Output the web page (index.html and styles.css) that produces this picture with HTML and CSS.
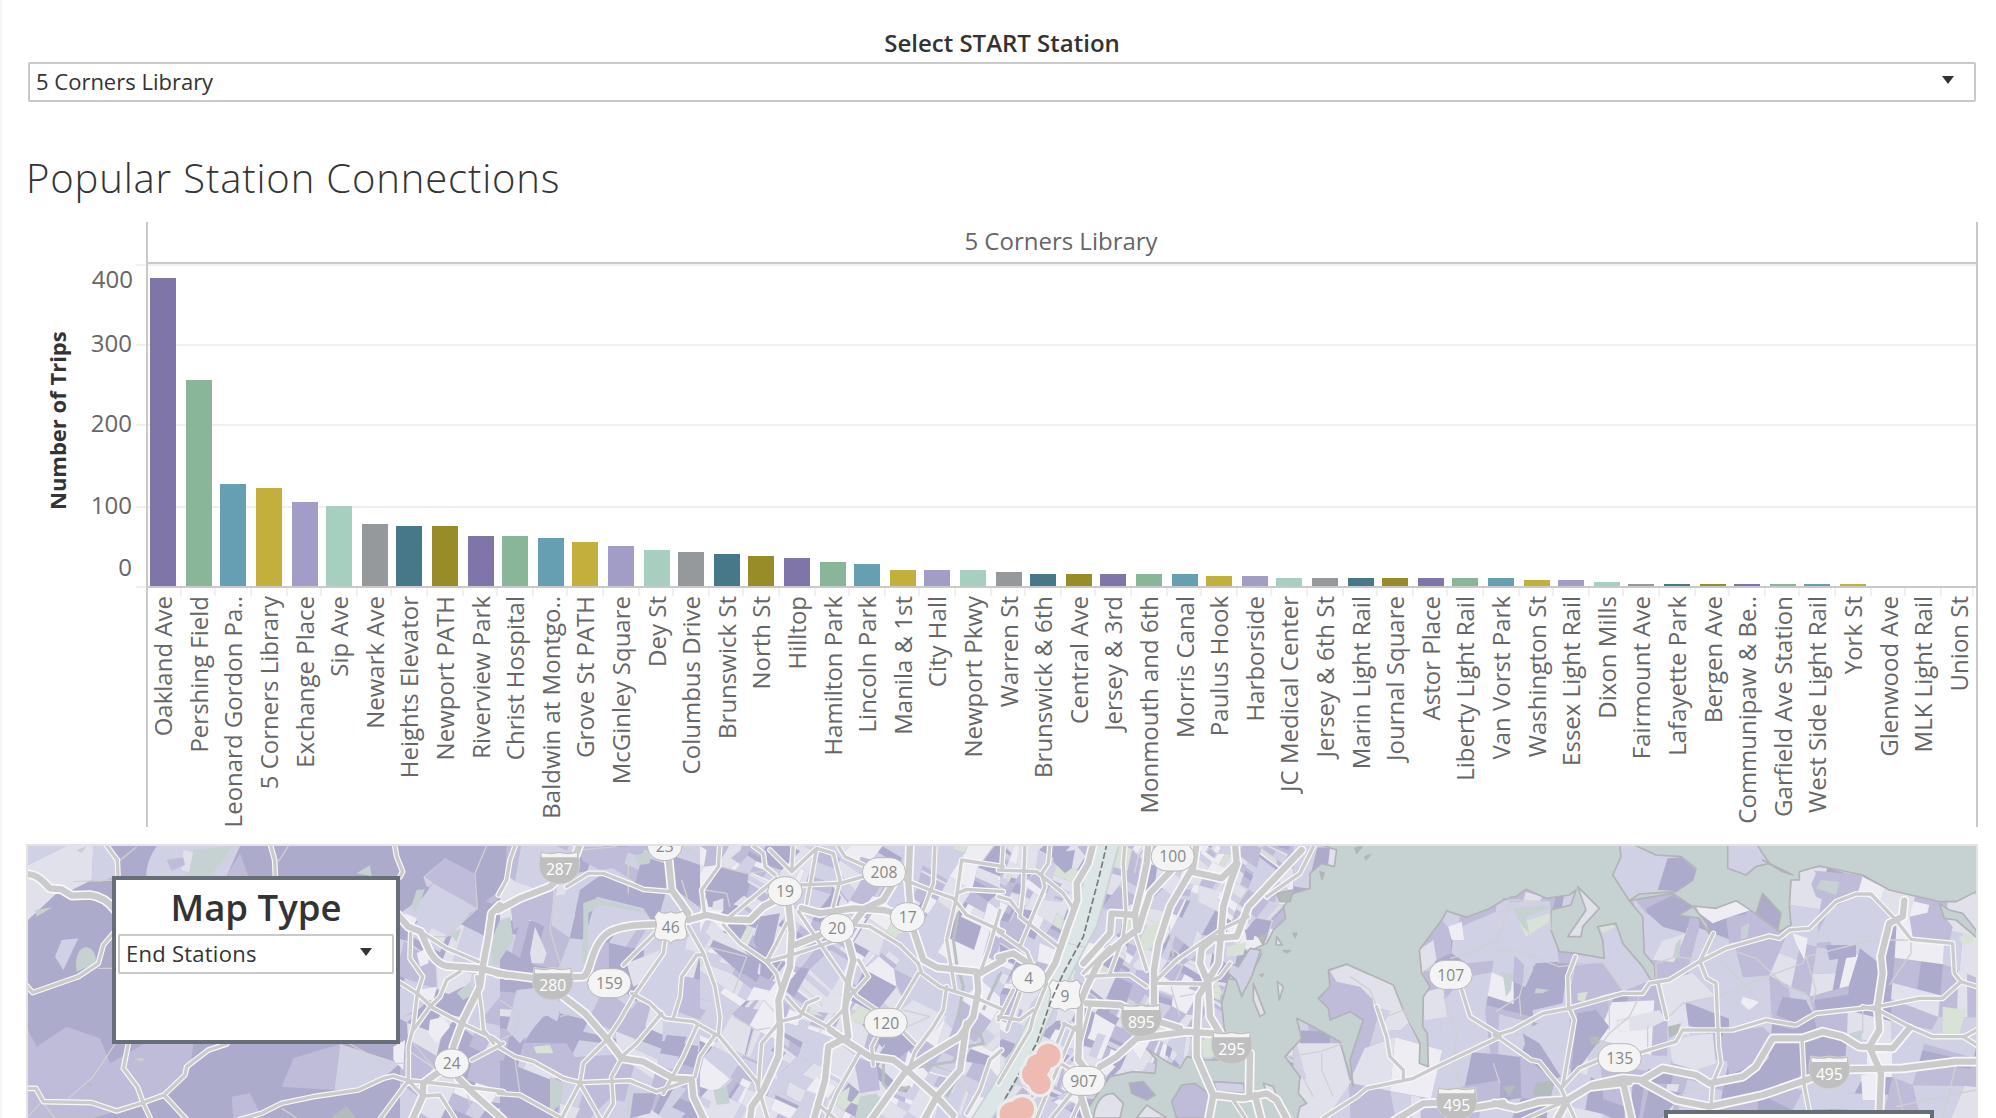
FILE: index.html
```html
<!DOCTYPE html>
<html lang="en">
<head>
<meta charset="utf-8">
<title>Popular Station Connections</title>
<link rel="stylesheet" href="styles.css">
</head>
<body>
<main class="dashboard">
  <section class="filter">
    <h2 class="filter-title">Select START Station</h2>
    <div class="select"><span>5 Corners Library</span><svg class="arrow" viewBox="0 0 12 8"><path d="M0 0H12L6 8Z"/></svg></div>
  </section>
  <h1 class="title">Popular Station Connections</h1>
  <section class="chart">
    <div class="axis">
      <div class="axis-title"><span>Number of Trips</span></div>
      <div class="axis-values"><span>400</span><span>300</span><span>200</span><span>100</span><span>0</span></div>
    </div>
    <div class="pane">
      <div class="pane-head"><span>5 Corners Library</span></div>
      <div class="plot" id="plot"></div>
      <div class="labels" id="labels"></div>
    </div>
  </section>
  <section class="map">
    <svg class="map-canvas" viewBox="84 48 5844 816" preserveAspectRatio="none" id="map">
      <defs>
        <g id="major">
          <g>
            <path d="M70,132C110,130 125,150 150,175L185,178L215,197L270,195C310,200 330,220 345,240M1190,250L1225,290L1262,305C1280,340 1290,395 1340,408L1440,415L1520,435"/>
            <path d="M1500,225L1475,250L1465,320L1450,400L1440,470L1390,570L1360,650L1355,700L1290,745L1270,760L1268,800L1235,874M1375,745L1420,790L1510,870"/>
          </g>
          <g transform="translate(1500)">
            <path d="M-5,240L60,205L150,170L215,110L240,40M-10,430L110,445L250,440C275,430 270,340 330,305C370,285 420,285 465,283M565,270L620,255L680,268L750,270L790,230L830,210M905,235L960,250L1060,235L1150,240L1180,248"/>
            <path d="M190,500L255,550L320,625L365,685L430,695L520,745L575,748L580,800L615,874M865,220L875,310L870,410L835,510L840,600L835,680L790,780L755,830L750,874M885,345L960,315M1180,160L1150,210L1095,235L1060,280M1230,40L1225,160L1230,220"/>
            <path d="M1240,300L1270,390L1310,412L1430,425L1435,480L1420,560L1380,620L1280,680L1220,720L1110,874M1045,335L1060,390L1045,450L1035,540L1045,620L985,650L975,750L940,874M990,600L1040,635L1110,680L1180,690L1220,720L1310,800L1360,855M1310,800L1270,874M1400,580L1380,720L1310,800M1440,430L1510,390M505,80L515,180L565,250"/>
          </g>
          <g transform="translate(3000)">
            <path d="M280,40L265,100L230,160L232,210L200,300L165,400L135,450M445,40L440,100L425,170L405,250L410,300L370,330L300,390L260,470L240,520L235,690L255,715M515,120L450,190L430,250L415,300M590,40L580,110L510,230L475,340L462,420L462,520M575,125L665,145L710,100L705,40M712,100L690,160L670,230L665,290L655,400L625,450L595,500L590,600L590,680L640,795L625,874"/>
            <path d="M905,60L820,150L745,230L710,320L640,325L605,355L600,400L625,460L630,560L660,610M260,520L360,525L430,560L540,595M300,710L350,680L410,625L560,605L640,610M750,670L748,790M640,795L730,805L800,790L830,810L865,874M765,795L785,874M-5,382L40,370L85,400M335,250L405,255M335,250L330,310L250,400M240,790L265,874M1180,874L1270,820L1330,818M1410,835L1510,818"/>
          </g>
          <g transform="translate(4488)">
            <path d="M-5,820L60,835L130,815L215,810L290,765L380,745L440,750L500,715L600,735L640,760L740,740L780,710L830,625L920,625L980,605L1040,620L1090,650L1190,655L1240,595M380,750L408,874M440,755L540,810L640,830L800,795L960,740M1040,718L1220,715L1380,695H1450M1225,212L1220,260L1180,280L1155,380L1160,430L1145,530L1150,600L1120,650L1155,730L1150,850M215,810L180,874M290,770L400,757"/>
          </g>
        </g>
        <g id="primary">
          <g>
            <path d="M315,40L352,90L354,138M810,40L824,90L826,138M1183,40L1190,80L1208,125L1200,140M70,455L98,488L235,440L295,400L310,345L340,310M70,775H108L130,815L275,818L350,843L430,818L492,795L555,735L560,710L625,660L680,642M385,642L370,715L412,770L430,820L455,874M492,795L565,874"/>
            <path d="M715,870L785,850L845,820L940,800L1075,780L1150,745L1180,738L1225,752L1330,762L1510,785M1232,310L1230,385L1268,440L1252,490L1240,590L1225,650V752M1195,455L1252,490L1300,535L1385,580L1480,625L1500,640M1262,305L1340,355L1435,395M1380,425L1340,450L1320,500L1290,530L1240,600M1430,440L1445,540L1450,600L1480,640M1225,752L1135,874M1510,640L1415,690M1225,752L1270,798L1320,795L1370,874"/>
          </g>
          <g transform="translate(1500)">
            <path d="M-5,195L20,150L30,90L48,40M265,130L310,130L400,165L430,178L510,185M200,170L265,130M660,40L655,110L605,180L615,260M565,290L610,370L645,470L660,560L655,615L770,755L805,874M465,310L370,405M495,335L490,370L400,500L360,570L320,630L250,700L240,760L180,874M-5,650L45,680L100,695L190,745L240,758L390,752L470,785L570,750M395,490L450,520L495,565L580,575L650,615"/>
            <path d="M605,375H590L545,440L540,500L520,565M-5,790L60,795L195,870M240,760L305,874M365,685L335,740L340,820L310,870M485,550L410,640L365,680M590,590L550,680L515,745L490,790M645,615L600,680L585,740M690,260L830,145M670,285L720,340L800,395L830,430L845,490M860,280L830,340L800,395L890,370L1010,330"/>
            <path d="M760,48L790,70L795,110L825,135M810,60L875,125L950,55L1000,70L1020,150L1000,230M950,55L920,220M880,40L875,125M900,165L1020,160L1090,140M1010,40L1035,80L1090,105M1215,150L1290,180L1360,205L1400,255L1510,305M1305,40L1300,160L1270,240M1385,90L1370,200L1340,330L1365,480M1385,90L1510,110M1370,190L1400,178L1510,185"/>
            <path d="M1065,285L1110,290L1200,345L1255,400L1265,430L1320,470L1430,505L1510,540M1255,430L1190,540M1340,470L1330,540L1300,590L1245,665L1225,720M895,245L960,340L1070,500L1130,540M1060,480L1030,540L980,590M840,575L900,560L920,520L955,505M860,500L900,545L1000,600M835,580L785,640L780,700L775,780M1120,705L1115,650L1130,620M1210,605L1245,640M1080,665L1010,790L980,864M1500,240L1465,360L1440,430M1505,660L1470,690L1440,780L1400,850M950,820L1010,870M1075,390L1105,440L1060,490"/>
          </g>
          <g transform="translate(3000)">
            <path d="M10,40L5,120M75,40L70,180L60,260M150,40L145,100L125,130L135,170L60,350M-5,120L110,125L190,190L220,235M-5,305L80,365L95,400M60,260L175,350M-5,200L30,210L60,250M375,40L370,100L378,250L370,320L330,430M470,450L530,390L660,300L745,260M475,460L610,462L660,440L690,400M250,430L330,350M260,440L340,435H390L440,470M405,310L440,420M945,40L900,130L800,200"/>
            <path d="M1385,480L1410,560L1500,615M970,864L1070,800L1100,775L1240,745L1300,715L1500,620M1130,530L1160,620L1170,680L1210,720V745M140,460L100,560L90,600L30,700L-5,760M40,480L-5,570M195,580L130,740L60,864M225,590L150,770L110,864M190,580L230,600M180,700L250,740M270,530L230,680M60,490L20,600M-5,560L60,570L100,540M215,790L150,870M250,790L215,870M700,810L740,870"/>
          </g>
          <g transform="translate(4488)">
            <path d="M-5,617L50,600L140,550L220,535L380,490H440L460,460L520,450L610,395L690,355L820,318L850,325L880,300L940,295L1020,215L1080,192H1125L1200,270L1245,328L1370,340L1375,430L1395,455L1340,505L1270,505L1145,530M1145,530L960,550L900,585L810,570L710,600H560L540,635L430,668M310,690L250,715L195,775M-5,612L105,690L130,695L195,775L240,874"/>
            <path d="M238,380L215,440L218,530L235,570L200,770M652,310L612,395L632,445L660,460L668,650L675,700L650,760L645,830M487,460L512,565M918,630L925,770L940,845M1100,530L1145,540L1240,590L1310,620H1405L1450,595M1405,622L1450,650M1395,455L1450,472M215,810L80,870"/>
          </g>
        </g>
        <g id="minor">
          <path d="M410,50L355,95M345,642L300,710L275,745L205,805M220,155L340,150M295,415H340M1460,48L1425,130L1432,235L1340,320H1290M1050,642L1155,700H1210M865,48L835,95M715,48L680,85L640,130M130,820L165,864M84,860L120,820M1240,640L1300,710M1380,380V425M845,835L890,864M1400,780L1420,864"/>
          <path transform="translate(1500)" d="M165,180L150,300L180,400M0,510L60,550L45,610L0,630M45,690L60,790M240,60L350,50M385,90V190M545,150L570,230M660,110L740,130L830,120M615,180L680,190L690,230M620,350L740,380L700,490M700,560L770,600L830,590M180,560L250,540M395,760L380,864M600,80L540,48M700,540L660,560M1290,560L1210,540M1200,600L1290,560"/>
          <path transform="translate(4488)" d="M0,330L20,290L40,210L160,215L165,300M0,360L60,360L150,395L190,410L320,395L380,480M95,410L70,500L0,545M70,500L75,560M430,500L400,560L340,610L290,680M515,565L560,520L680,495L760,460L920,400L930,380L1130,330H1245M690,355L780,385L870,470L930,490L950,540M930,380L960,480L950,520M1245,328V370L1180,465M660,380L740,460L830,560M480,455V400L540,380L610,390M455,590V660L300,700M1100,540V610M650,770L590,780L540,800M1440,700L1380,705L1340,864M1195,730L1220,840M1440,780L1200,830M340,510V600"/>
          <path transform="translate(3000)" d="M865,680L960,665L1030,640M965,670V720L1000,800M880,690L940,800M1050,440L1110,480L1130,530M1160,560L1210,540L1250,610M1500,325L1410,370L1350,385M1330,500L1370,600L1360,700M1360,700L1385,770M1480,700L1500,760M510,460L540,560M500,240L520,380M540,500L590,490M205,340L255,352"/>
        </g>
        <g id="interstate"><path d="M-56,-48Q-28,-40 0,-48Q28,-40 56,-48L60,-20C66,20 40,49 0,50C-40,49 -66,20 -60,-20Z" fill="#bfbfbf" stroke="#d2d2d2" stroke-width="3"/><path d="M-53,-43Q-26,-36 0,-43Q26,-36 53,-43V-30H-53Z" fill="#f4f4f4"/></g>
        <path id="us" d="M-37,-48Q-18,-36 0,-46Q18,-36 37,-48L49,-30Q38,-8 47,12Q54,36 30,39Q10,36 0,48Q-10,36 -30,39Q-54,36 -47,12Q-38,-8 -49,-30Z"/>
      </defs>
      <rect x="84" y="48" width="5850" height="820" fill="#adabcc"/>
      <g id="tracts"></g>
      <g>
        <path class="c1" d="M1195,48H1500V180L1430,235L1420,130L1335,85L1270,140L1290,200L1200,220ZM1210,560L1390,470L1440,480L1380,560L1260,540Z"/>
        <path class="c3" d="M84,48H200L84,105ZM280,48H315L355,95L354,138L300,155L275,150ZM470,48H720L680,138H438Q440,90 470,48ZM1020,642L1200,700L1150,745L1075,780L1003,780ZM165,380L185,330L235,325L190,420ZM1300,160L1432,235L1410,250L1350,320L1200,250L1270,200Z"/>
        <path class="c4" d="M200,48H280L275,150L205,185L170,190L84,270V105ZM550,60L620,80L580,130L545,120Z"/>
        <path class="c2" d="M84,600L110,650L200,590L300,625L330,700L430,642H580L570,720L490,795L430,820L280,864H84ZM845,770L880,685L1020,642L1003,780ZM695,800L750,790L780,850L700,864ZM1275,140L1335,85L1420,130L1432,235L1300,160ZM500,90L550,82L555,105L515,122ZM680,138L720,70L745,138ZM1140,864L1225,752L1200,800ZM1420,680L1500,645V780L1400,750Z"/>
        <path class="c5" d="M1215,250L1250,265L1240,300L1210,290ZM1250,370L1290,350L1285,400L1260,410ZM1290,570L1330,560L1350,590L1310,640L1285,610ZM1180,650L1215,630L1210,720L1180,690ZM1255,480L1310,470L1300,515L1265,500Z"/>
        <path class="wt" d="M580,60L700,48L660,100L630,138H565ZM1235,225L1250,180L1275,178L1245,250ZM228,400Q232,350 262,352Q290,360 288,400L230,425ZM1070,130L1110,105L1115,138ZM105,240L158,232L110,260ZM230,60L260,48L245,70ZM1470,340L1500,270V400L1480,405ZM1370,490L1410,455L1425,490L1390,510ZM1345,310L1385,295L1370,335ZM405,685L435,685L425,697Z"/>
        <path class="dk" d="M990,864L1040,828L1070,864ZM255,755L280,765L270,770Z"/>
        <g transform="translate(1500)">
          <path class="c1" d="M0,48H20L15,140L0,190ZM240,180L310,130L385,150L430,235L260,240L240,300L225,250ZM615,180L660,110L745,130L740,190L680,240L625,230ZM760,330L780,260L840,250L820,340L790,400ZM640,330L780,390L770,440L720,430L630,350ZM70,640L130,550L215,600L200,640ZM400,790L470,790L450,850L390,864ZM480,670L500,615L560,620L540,680ZM1135,620L1200,610L1240,650L1190,690ZM0,690L180,760L170,864H0Z"/>
          <path class="c2" d="M250,50L390,50L370,110L300,120L245,90ZM30,210L160,180L155,300L90,270L40,300ZM1060,680L1130,700L1140,780L1080,790ZM70,640L200,640L230,690L190,740L60,690Z"/>
          <path class="c3" d="M290,200L430,235L460,280L330,300L270,350L240,370ZM50,480L140,470L200,540L130,560L60,640L20,600ZM1180,550L1260,440L1320,480L1300,560L1240,640ZM500,340L600,370L540,430L520,560L440,510L420,460Z"/>
          <path class="c4" d="M90,370L105,290L140,370L130,400L95,400ZM380,400L480,360L440,450L400,470ZM640,215L670,205L670,240L635,240ZM1180,560L1240,510L1340,560L1310,600L1250,640Z"/>
          <path class="wt" d="M250,300L250,220L290,205L430,240L440,250L300,225L265,250L262,400L245,400ZM1080,800L1130,790L1150,830L1110,864H1065ZM150,740L190,760L185,820L150,850ZM0,270L30,260L40,330L0,390ZM400,80L450,60L450,100L420,105ZM640,780L680,770L690,820L650,825Z"/>
          <path class="gr" d="M1020,790L1050,770L1040,820L1010,830ZM100,650L150,645L160,670L110,670ZM1160,300L1200,290L1210,310L1170,315ZM930,530L970,560L930,550Z"/>
          <path d="M1375,250L1360,330L1370,400L1390,470L1375,560L1400,600L1440,610L1450,640L1400,650M1500,430L1450,540M1150,700L1150,760L1180,800M1200,780L1230,770M1230,715L1360,695L1380,660M1380,730L1340,800" fill="none" stroke="#b9c0c1" stroke-width="9"/>
        </g>
        <g transform="translate(3000)">
          <path class="gr" d="M440,290L480,270L470,340L430,370L420,330ZM680,350L740,335L730,375L680,380ZM645,450L665,480L660,510L640,505ZM380,270L400,260L400,310L380,320ZM605,630L635,630L640,680L610,680Z"/>
          <path class="c1" d="M160,70L225,60L215,115L195,130L160,95ZM735,300L770,290L760,330L740,330Z"/>
          <path class="c2" d="M1265,350L1325,270L1350,300L1355,370L1310,390L1300,340ZM1380,770L1500,750V840L1430,820Z"/>
          <path class="c3" d="M1360,300L1500,240V390L1400,400L1355,370Z"/>
          <path class="c4" d="M1258,360L1300,330L1310,390L1265,430ZM1265,490L1330,470L1340,560L1275,570ZM890,640L1020,640L1050,760L980,864L900,864L940,820Z"/>
          <path class="c5" d="M1345,290L1385,275L1392,330L1355,330Z"/>
        </g>
        <g transform="translate(4488)">
          <path class="c3" d="M0,215H160L190,400L90,410L60,380L0,350ZM300,280L370,290L440,400L465,450L380,485L320,395ZM410,200L450,250L570,310L480,340L440,360ZM80,600L215,545L220,620L190,740L90,640ZM1000,240L1080,195L1130,200L1190,280L1150,400L1060,330L950,340Z"/>
          <path class="c1" d="M120,400L185,395L210,440L200,520L90,545L70,510ZM245,550L300,540L340,590L260,700L220,760ZM450,235L530,195L590,230L570,310L500,290L455,250ZM840,660L920,640L910,745L800,790L750,760ZM860,500L930,510L950,550L900,580L840,555ZM80,610L130,640L195,740L170,750L100,690ZM990,345L1080,345L1080,380L1000,390ZM955,510L1140,480V520L960,550ZM460,770L560,790L500,864H440Z"/>
          <path class="c2" d="M690,260L780,250L800,310L700,340ZM240,400L320,400L380,480L260,510L225,470ZM930,120L1100,135L1080,190L1010,220L960,200ZM680,610L800,590L830,620L780,700L700,735ZM1240,260L1330,240L1370,290L1360,335L1250,320Z"/>
          <path class="c4" d="M500,450L590,430L660,500L560,520L515,560L490,480ZM520,640L570,620L650,610L660,700L600,720L530,700ZM360,570L490,540L510,570L450,600L370,605ZM900,60L960,130L930,200L890,200ZM1150,150L1260,190L1240,260L1200,260L1130,200Z"/>
          <path class="c5" d="M600,228L660,235L720,212L765,240L690,265L650,280L610,250ZM1100,140L1165,175L1150,215L1085,190ZM890,310L935,325L925,390L900,340ZM1205,340H1232V362H1205ZM1095,735L1140,730L1140,810H1100ZM365,575L400,570V605L370,600ZM740,500L790,515L760,540L735,520Z"/>
          <path class="gr" d="M1340,530L1410,540L1390,610H1340ZM70,280L160,250L160,275L90,320ZM310,290L350,282L360,290L320,310ZM1390,320L1435,310L1430,340L1400,345ZM245,490L275,485L265,515L245,510Z"/>
          <path class="wt" d="M20,430L50,430L45,480L30,500ZM540,340L555,325L550,380L530,385ZM735,290L760,280L755,320L735,330ZM975,150L1030,155L1020,195L960,175ZM50,235L150,225L160,235L90,260L100,310L80,290ZM1060,610L1100,600L1095,630L1070,635ZM120,475L160,480L140,490L115,490Z"/>
          <path class="dk" d="M280,620H310V640L285,645ZM515,590L555,580L545,610L520,625ZM120,760L175,750L165,800L110,795ZM20,770L60,765L40,800Z"/>
        </g>
      </g>
      <g class="wt coast">
        <path class="river" transform="translate(3000)" d="M285,40H358L315,200L290,290L230,400L150,560L110,660L40,770L-30,874H-90L20,700L90,560L140,440L200,320L235,220L250,150Z"/>
        <path transform="translate(3000)" d="M950,40L1010,60L1003,110L965,100L930,130V175L880,190L850,230L857,265L820,300L800,340L745,365L785,372L760,420L745,445L725,500L710,450L685,445L665,520L672,590L700,690H620L560,680L540,715L500,695L440,655L470,690L465,730L400,725L330,740L280,810L240,874H890L900,830L920,820L895,790L900,740L855,680L905,625L890,565L940,590L1020,635L1060,770L1050,690L1090,570L1050,545L990,570L985,535L955,505L990,470L985,420L1040,402L1180,465L1210,540L1260,640L1258,700L1285,710L1282,610L1268,590L1270,500L1290,470L1265,430L1258,360L1325,270L1340,243L1400,262L1470,235L1520,205V40Z"/>
        <path transform="translate(4488)" d="M20,40V205L60,200L90,178L150,205L220,195L240,180L225,225L165,240V300L190,365L240,370L325,385L320,330L305,290L360,280L380,340L440,410L465,450H478L475,405L445,370L440,260L400,212L530,190L590,230L550,255L610,265L645,320L632,280L590,228L660,235L720,212L770,245L850,305L885,285L880,230L885,150L910,150V125L970,108L1100,135L1180,180L1330,215L1380,215L1450,180V40Z"/>
        <path transform="translate(4488)" stroke="none" d="M0,40H40V204L0,208Z"/>
        <path transform="translate(4488)" d="M1330,220L1360,240L1400,250L1440,300L1445,325L1380,270L1345,265Z"/>
      </g>
      <g class="coast">
        <g transform="translate(4488)">
          <path class="c3" d="M370,40L375,80L350,135L400,212L430,192L540,185L590,150L600,115L555,80L480,75L415,45ZM695,40V115L750,135L780,110L820,100L780,40Z"/>
          <path class="c1" d="M780,250L800,190L855,250L845,300Z"/>
          <path class="c1" stroke="none" d="M515,85L555,82L600,120L590,152L540,183L485,180Z"/>
          <path class="c4" d="M245,170L310,235L260,290L255,320L215,320L270,240ZM800,90L890,135L860,125Z"/>
        </g>
        <g transform="translate(3000)">
          <path class="c1" d="M388,760L430,755L465,795L440,810L395,790Z"/>
          <path class="c2" d="M515,815L545,765L585,760L640,800L625,864H530Z"/>
          <path class="c3" d="M640,755L730,760L735,790L650,785ZM690,400L715,410L750,355L782,360L755,440L725,498L708,450L685,430Z"/>
          <path class="c4" d="M280,864Q290,790 340,790L370,820L360,864ZM410,864L440,825L500,864ZM760,460L795,550L780,560L760,510ZM830,320L847,345L828,345ZM832,455L850,470L838,510ZM790,760L820,770L850,864L800,790Z"/>
          <path class="c4" stroke="none" d="M990,424L1040,406L1178,468L1130,520L1080,470L1010,455Z"/>
          <path class="dk" d="M830,190L880,180L870,215L840,215ZM775,320L800,310L790,345ZM880,310L890,310L885,322ZM1065,55L1085,50L1070,70ZM1095,80L1110,75L1098,88ZM780,435L790,432L786,440ZM850,362L870,362L862,368ZM960,125L972,130L966,148Z"/>
        </g>
      </g>
      <use href="#minor" class="minor"/>
      <use href="#primary" class="casing-p"/>
      <use href="#major" class="casing-m"/>
      <use href="#primary" class="road-p"/>
      <use href="#major" class="road-m"/>
      <g id="shields"></g>
      <path class="border" transform="translate(3000)" d="M321,40L300,130L250,320L190,430L150,520L110,640L15,806"/>
      <g transform="translate(3000)">
        <g class="halo"><circle cx="145" cy="677" r="45"/><circle cx="115" cy="708" r="45"/><circle cx="102" cy="733" r="45"/><circle cx="120" cy="760" r="42"/><circle cx="66" cy="838" r="46"/><circle cx="35" cy="852" r="46"/></g>
        <g class="stops"><circle cx="145" cy="677" r="36"/><circle cx="115" cy="708" r="36"/><circle cx="102" cy="733" r="36"/><circle cx="120" cy="760" r="32"/><circle cx="66" cy="838" r="36"/><circle cx="35" cy="852" r="36"/></g>
      </g>
    </svg>
    <div class="panel">
      <h3 class="panel-title">Map Type</h3>
      <div class="select select-small"><span>End Stations</span><svg class="arrow" viewBox="0 0 12 8"><path d="M0 0H12L6 8Z"/></svg></div>
    </div>
    <div class="panel panel-legend"></div>
  </section>
</main>
<script src="app.js"></script>
</body>
</html>
```
FILE: styles.css
```css
* { box-sizing: border-box; }
body {
  margin: 0;
  width: 1996px;
  height: 1118px;
  overflow: hidden;
  background: #fff;
  font-family: "Open Sans", "Noto Sans", sans-serif;
  color: #333;
}
.dashboard {
  height: 1118px;
  border-left: 2px solid #f5f5f5;
  padding: 26px 18px 0 24px;
  overflow: hidden;
}
.filter { padding: 0 2px; }
.filter-title {
  margin: 0;
  height: 36px;
  line-height: 34px;
  font-size: 24px;
  font-weight: 600;
  text-align: center;
}
.select {
  display: flex;
  align-items: center;
  justify-content: space-between;
  height: 40px;
  border: 2px solid #c9c9c9;
  border-radius: 2px;
  padding: 0 20px 0 6px;
  font-size: 22px;
  line-height: 34px;
}
.select span { padding-bottom: 2px; }
.arrow { width: 12px; height: 8px; fill: #333; margin-top: -4px; }
.title {
  margin: 42px 0 0;
  height: 78px;
  line-height: 67px;
  font-size: 40px;
  font-weight: 350;
  letter-spacing: 0.85px;
}
.chart { display: flex; height: 622px; color: #666; font-size: 24px; }
.axis {
  display: flex;
  width: 120px;
  padding-top: 40px;
  background:
    linear-gradient(#f0f0f0, #f0f0f0) 110px 42px / 10px 2px no-repeat,
    linear-gradient(#f0f0f0, #f0f0f0) 110px 122px / 10px 2px no-repeat,
    linear-gradient(#f0f0f0, #f0f0f0) 110px 202px / 10px 2px no-repeat,
    linear-gradient(#f0f0f0, #f0f0f0) 110px 284px / 10px 2px no-repeat,
    linear-gradient(#f0f0f0, #f0f0f0) 110px 364px / 10px 2px no-repeat;
}
.axis-title {
  width: 61px;
  height: 317px;
  display: flex;
  justify-content: center;
  align-items: center;
  writing-mode: vertical-rl;
  transform: rotate(180deg);
  font-size: 22px;
  font-weight: 700;
  color: #333;
}
.axis-values {
  width: 45px;
  display: grid;
  grid-template-rows: 64px 80px 82px 62px 34px;
  justify-items: end;
  line-height: 34px;
}
.axis-values span:first-child { margin-right: -1px; }
.pane {
  width: 1832px;
  height: 605px;
  border-left: 2px solid #c9c9c9;
  border-right: 2px solid #c9c9c9;
}
.pane-head {
  height: 42px;
  padding-right: 2px;
  border-bottom: 2px solid #c9c9c9;
  line-height: 38px;
  text-align: center;
}
.plot {
  display: flex;
  align-items: flex-end;
  height: 324px;
  border-bottom: 2px solid #c9c9c9;
  background:
    linear-gradient(#f0f0f0, #f0f0f0) 0 0 / 100% 2px no-repeat,
    linear-gradient(#f0f0f0, #f0f0f0) 0 80px / 100% 2px no-repeat,
    linear-gradient(#f0f0f0, #f0f0f0) 0 160px / 100% 2px no-repeat,
    linear-gradient(#f0f0f0, #f0f0f0) 0 242px / 100% 2px no-repeat;
}
.bar { flex: none; border-left: 2px solid transparent; }
.bar i { display: block; width: 26px; height: 100%; }
.labels { display: flex; }
.label {
  flex: none;
  padding-top: 8px;
  background: linear-gradient(#f0f0f0, #f0f0f0) right 2px top 0 / 2px 8px no-repeat;
}
.label span {
  display: block;
  width: 30px;
  line-height: 30px;
  writing-mode: vertical-rl;
  transform: rotate(180deg);
  white-space: nowrap;
}
.map {
  position: relative;
  height: 274px;
  border: 2px solid #e3e3e3;
  border-bottom: 0;
  overflow: hidden;
}
.map-canvas { display: block; width: 1948px; height: 272px; }
.panel {
  position: absolute;
  left: 84px;
  top: 30px;
  width: 288px;
  height: 168px;
  padding: 2px;
  border: 4px solid #666e78;
  background: #fff;
}
.panel-legend { left: 1636px; top: 264px; width: 270px; }
.panel-title {
  margin: 0;
  height: 52px;
  line-height: 51px;
  font-size: 36.5px;
  font-weight: 600;
  text-align: center;
}
.select-small { letter-spacing: 0.25px; }
.c1 { fill: #adabcc; }
.c2 { fill: #bfbcd9; }
.c3 { fill: #d0d1e4; }
.c4 { fill: #e1e1ec; }
.c5 { fill: #eeedf3; }
.wt { fill: #c6d2d1; }
.gr { fill: #d8e2d6; }
.dk { fill: #b3bbbd; }
.coast path { stroke: #b1b3b6; stroke-width: 5; stroke-linejoin: round; }
.coast path.river { fill: #dde6e6; stroke: #c6d2d1; }
.coast path[stroke="none"] { stroke: none; }
.minor { fill: none; stroke: #d0d0d3; stroke-width: 4; stroke-linejoin: round; }
.street { fill: none; stroke: #d6d6dc; stroke-width: 4; stroke-linejoin: round; }
.casing-p, .casing-m, .road-p, .road-m { fill: none; stroke-linejoin: round; stroke-linecap: round; }
.casing-p { stroke: #f8f8fa; stroke-width: 17; }
.casing-m { stroke: #f8f8fa; stroke-width: 29; }
.road-p { stroke: #cbcbcb; stroke-width: 10; }
.road-m { stroke: #cbcbcb; stroke-width: 19; }
.route { fill: #f4f4f4; stroke: #b8b8b8; stroke-width: 3; }
.route-num { font-size: 47px; fill: #888; text-anchor: middle; }
.route-num.light { fill: #fff; }
.border { fill: none; stroke: #77797b; stroke-width: 5; stroke-dasharray: 20 8; }
.halo { fill: #ececec; }
.stops { fill: #edbbb1; }
```
FILE: app.js
```js
const stations = [
  ["Oakland Ave", 308], ["Pershing Field", 206], ["Leonard Gordon Pa..", 102], ["5 Corners Library", 98],
  ["Exchange Place", 84], ["Sip Ave", 80], ["Newark Ave", 62], ["Heights Elevator", 60],
  ["Newport PATH", 60], ["Riverview Park", 50], ["Christ Hospital", 50], ["Baldwin at Montgo..", 48],
  ["Grove St PATH", 44], ["McGinley Square", 40], ["Dey St", 36], ["Columbus Drive", 34],
  ["Brunswick St", 32], ["North St", 30], ["Hilltop", 28], ["Hamilton Park", 24],
  ["Lincoln Park", 22], ["Manila & 1st", 16], ["City Hall", 16], ["Newport Pkwy", 16],
  ["Warren St", 14], ["Brunswick & 6th", 12], ["Central Ave", 12], ["Jersey & 3rd", 12],
  ["Monmouth and 6th", 12], ["Morris Canal", 12], ["Paulus Hook", 10], ["Harborside", 10],
  ["JC Medical Center", 8], ["Jersey & 6th St", 8], ["Marin Light Rail", 8], ["Journal Square", 8],
  ["Astor Place", 8], ["Liberty Light Rail", 8], ["Van Vorst Park", 8], ["Washington St", 6],
  ["Essex Light Rail", 6], ["Dixon Mills", 4], ["Fairmount Ave", 2], ["Lafayette Park", 2],
  ["Bergen Ave", 2], ["Communipaw & Be..", 2], ["Garfield Ave Station", 2], ["West Side Light Rail", 2],
  ["York St", 2], ["Glenwood Ave", 0], ["MLK Light Rail", 0], ["Union St", 0]
];
const barColors = ["#7f75a8", "#89b699", "#659fb1", "#c3b03c", "#a29dc7", "#a7cfbf", "#95999b", "#46788a", "#988c29"];

const plot = document.getElementById("plot");
const labels = document.getElementById("labels");
const left = i => Math.min(1828, 2 * Math.round(17.6 * i + 0.2));
stations.forEach(([name, height], i) => {
  const width = left(i + 1) - left(i);
  const bar = document.createElement("div");
  bar.className = "bar";
  bar.style.width = width + "px";
  bar.style.height = height + "px";
  const fill = document.createElement("i");
  fill.style.background = barColors[i % 9];
  bar.append(fill);
  plot.append(bar);
  const label = document.createElement("div");
  label.className = "label";
  label.style.width = width + "px";
  const text = document.createElement("span");
  text.textContent = name;
  label.append(text);
  labels.append(label);
});

const NS = "http://www.w3.org/2000/svg";
const add = (parent, tag, attrs, text) => {
  const node = document.createElementNS(NS, tag);
  for (const key in attrs) node.setAttribute(key, attrs[key]);
  if (text) node.textContent = text;
  parent.append(node);
  return node;
};

/* Census tracts: jittered cells, split at random into smaller ones. */
let seed = 41;
const rnd = () => {
  seed = (seed * 1664525 + 1013904223) % 4294967296;
  return seed / 4294967296;
};
const tracts = document.getElementById("tracts");
function region(x0, x1, size, angle, weights, depth, streets) {
  const clip = add(tracts, "clipPath", { id: "r" + x0 });
  add(clip, "rect", { x: x0, y: 48, width: x1 - x0, height: 820 });
  const g = add(tracts, "g", { "clip-path": `url(#r${x0})` });
  const paths = { c1: "", c2: "", c3: "", c4: "", c5: "", gr: "" };
  let lines = "";
  const cx = (x0 + x1) / 2, cy = 456;
  const half = Math.hypot(x1 - x0, 820) / 2 + size;
  const n = Math.ceil(2 * half / size);
  const cos = Math.cos(angle), sin = Math.sin(angle);
  const pts = [];
  for (let r = 0; r <= n; r++) {
    pts.push([]);
    for (let c = 0; c <= n; c++) {
      const u = (c - n / 2 + (rnd() - 0.5) * 0.5) * size;
      const v = (r - n / 2 + (rnd() - 0.5) * 0.5) * size;
      pts[r].push([cx + u * cos - v * sin, cy + u * sin + v * cos]);
    }
  }
  const mix = (a, b, t) => [a[0] + (b[0] - a[0]) * t, a[1] + (b[1] - a[1]) * t];
  const pick = () => {
    let t = rnd();
    for (const key in weights) {
      t -= weights[key];
      if (t <= 0) return key;
    }
    return "c3";
  };
  const p = a => a[0].toFixed(0) + "," + a[1].toFixed(0);
  const cell = (a, b, c, d, level) => {
    if (level && rnd() < 0.6) {
      const t = 0.35 + rnd() * 0.3, s = t + (rnd() - 0.5) * 0.15;
      if (rnd() < 0.5) {
        const e = mix(a, b, t), f = mix(d, c, s);
        cell(a, e, f, d, level - 1);
        cell(e, b, c, f, level - 1);
      } else {
        const h = mix(a, d, t), k = mix(b, c, s);
        cell(a, b, k, h, level - 1);
        cell(h, k, c, d, level - 1);
      }
      return;
    }
    paths[pick()] += "M" + p(a) + "L" + p(b) + "L" + p(c) + "L" + p(d) + "Z";
    if (rnd() < streets) lines += "M" + p(a) + "L" + p(b) + "L" + p(c);
  };
  for (let r = 0; r < n; r++) {
    for (let c = 0; c < n; c++) cell(pts[r][c], pts[r][c + 1], pts[r + 1][c + 1], pts[r + 1][c], depth);
  }
  for (const key in paths) add(g, "path", { class: key, d: paths[key] });
  add(g, "path", { class: "street", d: lines });
}
region(1200, 1500, 100, 0.4, { c1: 0.35, c2: 0.2, c3: 0.25, c4: 0.15, c5: 0.05 }, 2, 0.03);
region(1500, 2100, 110, 0.3, { c1: 0.18, c2: 0.33, c3: 0.31, c4: 0.14, c5: 0.04 }, 2, 0.03);
region(2100, 3000, 75, 0.5, { c1: 0.1, c2: 0.18, c3: 0.29, c4: 0.27, c5: 0.14, gr: 0.02 }, 3, 0.08);
region(3000, 3880, 60, 0.45, { c1: 0.14, c2: 0.2, c3: 0.26, c4: 0.25, c5: 0.12, gr: 0.03 }, 3, 0.12);
region(3880, 5928, 120, 0.15, { c1: 0.23, c2: 0.33, c3: 0.3, c4: 0.11, c5: 0.03 }, 2, 0.01);

/* Route shields: kind, number, centre. */
const shields = document.getElementById("shields");
[
  ["s", "24", 1355, 700], ["i", "287", 1678, 112], ["s", "23", 1994, 48], ["s", "19", 2355, 183],
  ["s", "208", 2652, 126], ["s", "17", 2723, 261], ["s", "20", 2511, 294], ["u", "46", 2012, 291],
  ["i", "280", 1658, 460], ["s", "159", 1828, 459], ["s", "120", 2657, 578], ["s", "100", 3518, 79],
  ["s", "4", 3086, 444], ["u", "9", 3195, 497], ["i", "895", 3424, 570], ["i", "295", 3695, 652],
  ["s", "907", 3251, 752], ["s", "107", 4352, 434], ["i", "495", 4370, 820], ["s", "135", 4859, 684],
  ["i", "495", 5488, 726]
].forEach(([kind, number, x, y]) => {
  if (kind === "s") {
    const w = number.length > 2 ? 130 : 104;
    add(shields, "rect", { class: "route", x: x - w / 2, y: y - 43, width: w, height: 87, rx: w > 104 ? 50 : 52, ry: 43 });
  } else if (kind === "u") {
    add(shields, "use", { href: "#us", class: "route", transform: `translate(${x} ${y})` });
  } else {
    add(shields, "use", { href: "#interstate", transform: `translate(${x} ${y})` });
  }
  add(shields, "text", { class: "route-num" + (kind === "i" ? " light" : ""), x, y: y + (kind === "i" ? 23 : 18) }, number);
});
```
